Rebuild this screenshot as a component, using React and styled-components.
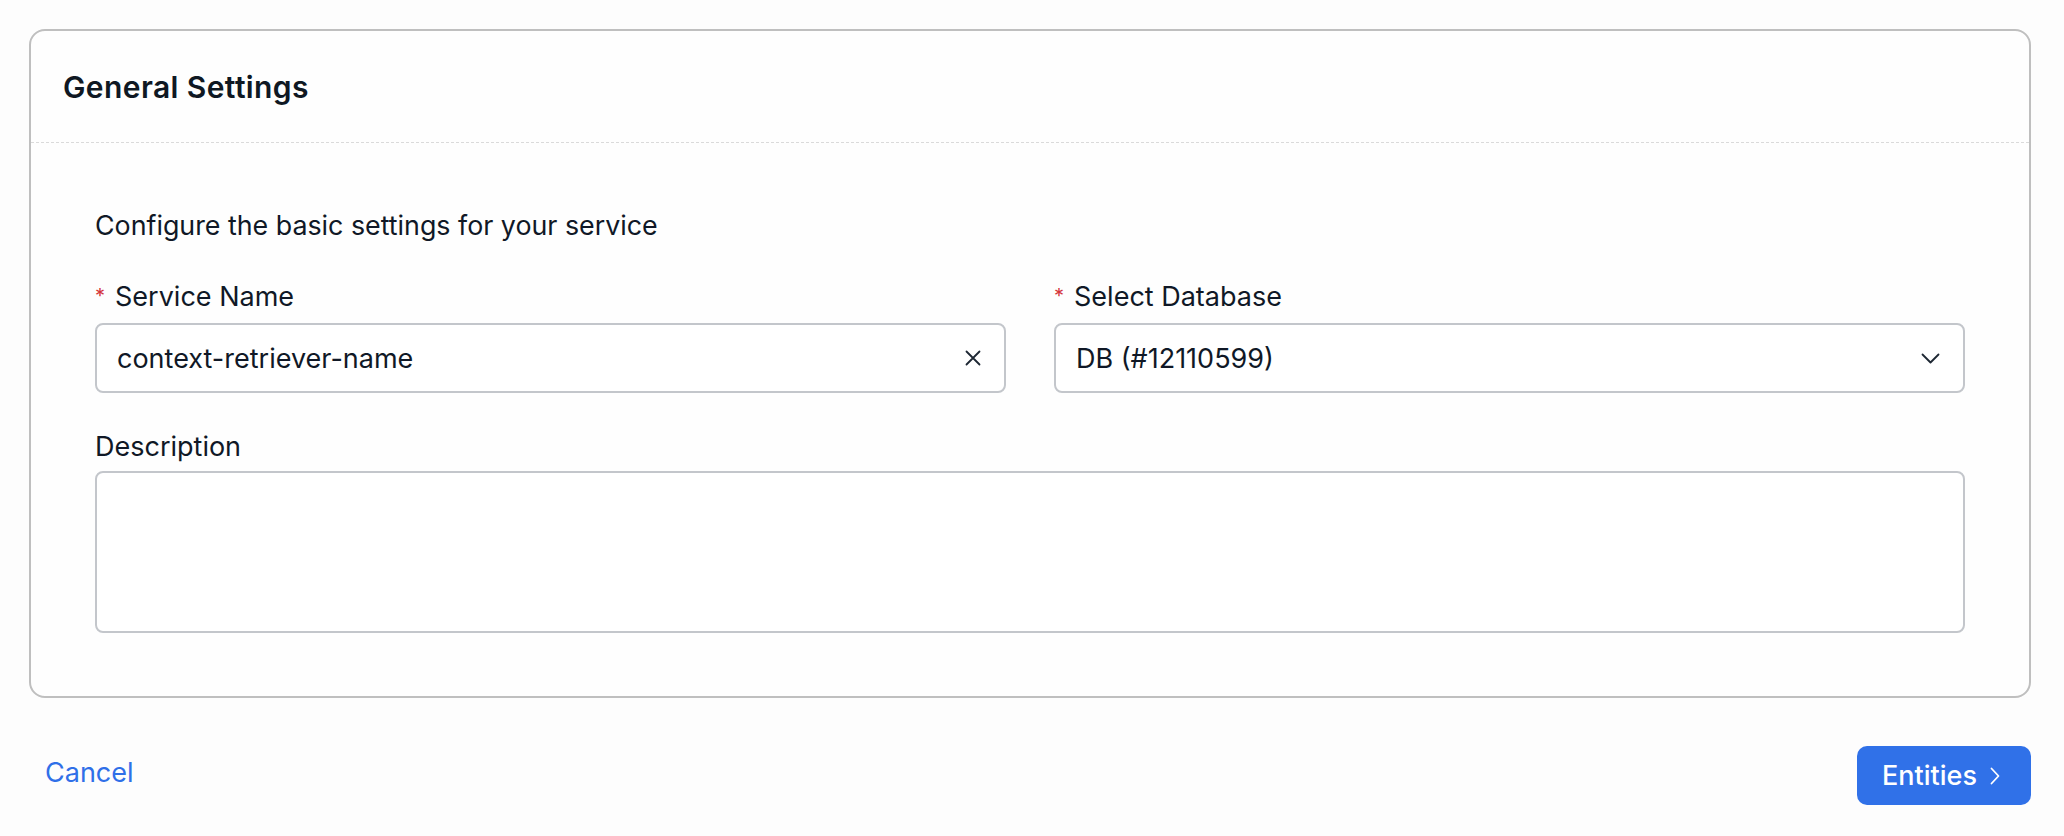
import React from 'react';
import styled, { createGlobalStyle } from 'styled-components';

const GlobalStyle = createGlobalStyle`
    * {
        box-sizing: border-box;
    }
    body {
        margin: 0;
        background: #fdfdfd;
        font-family: 'Inter', 'Noto Sans', sans-serif;
        color: #101826;
    }
`

const ClearIcon = () => (
    <svg width="16" height="16" viewBox="0 0 16 16" fill="none">
        <path d="M1.5 1.5 L14.5 14.5 M14.5 1.5 L1.5 14.5" stroke="#1d2733" strokeWidth="1.8" strokeLinecap="round" />
    </svg>
)

const ChevronDown = () => (
    <svg width="19" height="11" viewBox="0 0 19 11" fill="none">
        <path d="M1.5 1.5 L9.5 9.5 L17.5 1.5" stroke="#1d2733" strokeWidth="1.8" strokeLinecap="round" strokeLinejoin="round" />
    </svg>
)

const ChevronRight = () => (
    <svg width="12" height="18" viewBox="0 0 12 18" fill="none">
        <path d="M2.5 1.5 L9.5 9 L2.5 16.5" stroke="#ffffff" strokeWidth="1.8" strokeLinecap="round" strokeLinejoin="round" />
    </svg>
)

const App = () => {
    return (
        <>
            <GlobalStyle />
            <Page>
                <Card>
                    <CardHeader>
                        <Title>General Settings</Title>
                    </CardHeader>
                    <CardBody>
                        <Intro>Configure the basic settings for your service</Intro>
                        <FieldGrid>
                            <Field>
                                <Label><Required>*</Required>Service Name</Label>
                                <Control>
                                    <TextInput type="text" defaultValue="context-retriever-name" />
                                    <IconButton type="button" aria-label="Clear">
                                        <ClearIcon />
                                    </IconButton>
                                </Control>
                            </Field>
                            <Field>
                                <Label><Required>*</Required>Select Database</Label>
                                <Control as="button" type="button">
                                    <SelectValue>DB (#12110599)</SelectValue>
                                    <SelectArrow>
                                        <ChevronDown />
                                    </SelectArrow>
                                </Control>
                            </Field>
                            <Field $wide>
                                <Label>Description</Label>
                                <TextArea />
                            </Field>
                        </FieldGrid>
                    </CardBody>
                </Card>
                <Footer>
                    <CancelLink href="#">Cancel</CancelLink>
                    <NextButton type="button">
                        Entities
                        <ChevronRight />
                    </NextButton>
                </Footer>
            </Page>
        </>
    )
}

const Page = styled.div`
    padding: 29px 33px 0 29px;
`

const Card = styled.section`
    border: 2px solid #bfbfbf;
    border-radius: 16px;
    background: #fefefe;
`

const CardHeader = styled.header`
    display: flex;
    align-items: center;
    height: 112px;
    padding: 0 32px;
    border-bottom: 1px dashed #dadada;
`

const Title = styled.h2`
    margin: 0;
    font-size: 30px;
    font-weight: 600;
    letter-spacing: 0.4px;
    color: #0f1823;
`

const CardBody = styled.div`
    padding: 64px 64px 63px;
`

const Intro = styled.p`
    margin: 0 0 36px;
    font-size: 26.8px;
    line-height: 36px;
`

const FieldGrid = styled.div`
    display: grid;
    grid-template-columns: 1fr 1fr;
    column-gap: 48px;
    row-gap: 36px;
`

const Field = styled.div`
    display: flex;
    flex-direction: column;
    gap: 6px;
    grid-column: ${props => props.$wide ? '1 / -1' : 'auto'};
`

const Label = styled.label`
    display: flex;
    align-items: baseline;
    font-size: 27px;
    line-height: 36px;
`

const Required = styled.span`
    color: #d4353d;
    font-size: 20px;
    margin-right: 10px;
    position: relative;
    top: -3px;
`

const Control = styled.div`
    display: flex;
    align-items: center;
    height: 70px;
    padding: 0 20px 0 20px;
    border: 2px solid #c3c6cb;
    border-radius: 8px;
    background: #ffffff;
    font: inherit;
    color: inherit;
    text-align: left;
    cursor: pointer;
`

const TextInput = styled.input`
    flex: 1;
    min-width: 0;
    border: none;
    outline: none;
    padding: 0;
    background: transparent;
    font-family: inherit;
    font-size: 27px;
    color: #101826;
`

const IconButton = styled.button`
    display: flex;
    align-items: center;
    justify-content: center;
    border: none;
    background: none;
    padding: 0;
    margin-right: 3px;
    cursor: pointer;
`

const SelectValue = styled.span`
    flex: 1;
    font-size: 27px;
    color: #101826;
`

const SelectArrow = styled.span`
    display: flex;
    margin-right: 3px;
`

const TextArea = styled.textarea`
    height: 162px;
    resize: none;
    padding: 16px 20px;
    border: 2px solid #c3c6cb;
    border-radius: 8px;
    background: #ffffff;
    font-family: inherit;
    font-size: 27px;
    outline: none;
`

const Footer = styled.div`
    display: flex;
    align-items: center;
    justify-content: space-between;
    margin-top: 48px;
    padding-left: 16px;
`

const CancelLink = styled.a`
    margin-bottom: 7px;
    font-size: 27px;
    color: #2f6fe8;
    text-decoration: none;
`

const NextButton = styled.button`
    display: flex;
    align-items: center;
    gap: 12px;
    height: 59px;
    padding: 0 30px 0 25px;
    border: none;
    border-radius: 10px;
    background: #3071e8;
    color: #ffffff;
    font-family: inherit;
    font-size: 27px;
    font-weight: 500;
    cursor: pointer;
`

export default App
